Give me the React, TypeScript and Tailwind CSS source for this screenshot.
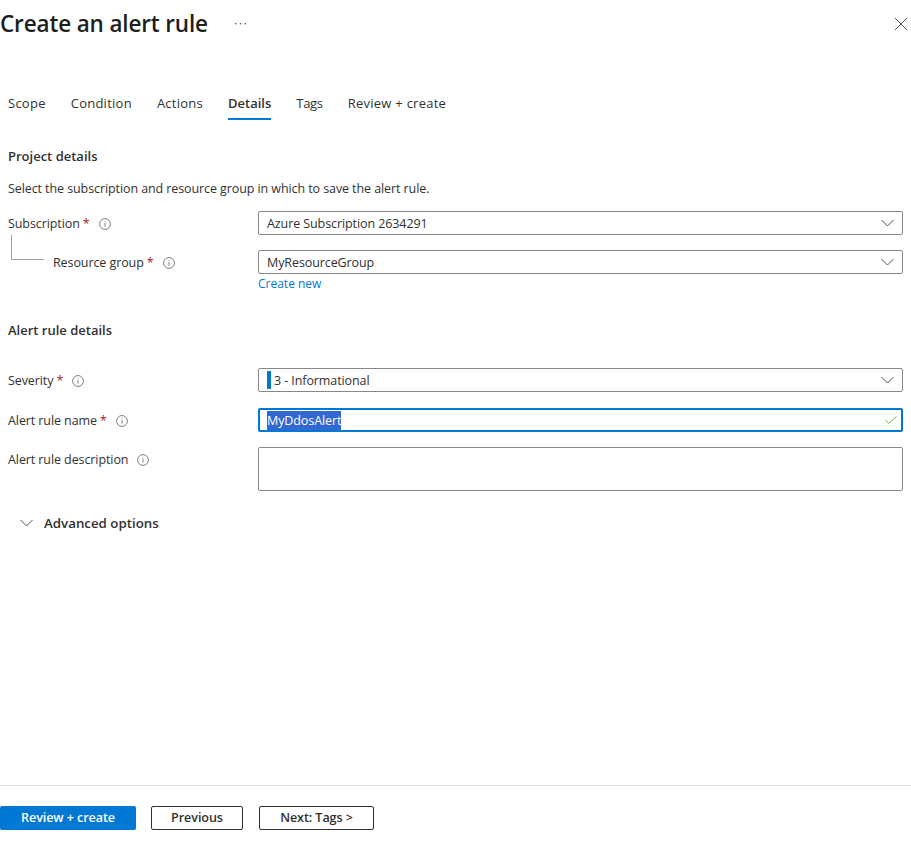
import type { ReactNode } from "react";

const tabs = ["Scope", "Condition", "Actions", "Details", "Tags", "Review + create"];

function InfoIcon() {
  return (
    <svg width="12" height="12" viewBox="0 0 12 12" fill="none" className="shrink-0">
      <circle cx="6" cy="6" r="5.4" stroke="#707070" strokeWidth="0.9" />
      <rect x="5.55" y="5" width="0.9" height="3.6" fill="#707070" />
      <rect x="5.55" y="3.2" width="0.9" height="0.9" fill="#707070" />
    </svg>
  );
}

function Chevron({ color = "#505050" }: { color?: string }) {
  return (
    <svg width="13" height="8" viewBox="0 0 13 8" fill="none">
      <path d="M0.5 1 L6.5 7 L12.5 1" stroke={color} strokeWidth="1" />
    </svg>
  );
}

function FieldLabel({ text, required }: { text: string; required?: boolean }) {
  return (
    <div className="flex h-[24px] items-center pt-[2px]">
      <span>{text}</span>
      {required && <span className="ml-[3px] text-[#a4262c]">*</span>}
      <span className="ml-[9px]">
        <InfoIcon />
      </span>
    </div>
  );
}

function Select({ children }: { children: ReactNode }) {
  return (
    <div className="flex h-[24px] items-center justify-between rounded-[2px] border border-[#8a8886] pl-[8px] pr-[8px]">
      <div className="flex items-center">{children}</div>
      <Chevron />
    </div>
  );
}

function Row({ label, children, className }: { label: ReactNode; children: ReactNode; className?: string }) {
  return (
    <div className={`grid grid-cols-[250px_645px] ${className ?? ""}`}>
      <div>{label}</div>
      <div>{children}</div>
    </div>
  );
}

function tabClass(tab: string) {
  if (tab === "Details") return "h-[29px] border-b-2 border-[#0078d4] font-semibold tracking-normal";
  if (tab === "Tags") return "h-[29px] tracking-[-0.3px]";
  return "h-[29px]";
}

export default function App() {
  return (
    <div
      className="flex h-[841px] w-[911px] flex-col overflow-hidden bg-white text-[12.5px] leading-[24px] tracking-[-0.09px] text-[#323130]"
      style={{ fontFamily: '"Open Sans", "Noto Sans", sans-serif' }}
    >
      <header className="flex h-[48px] items-center justify-between pr-[2px]">
        <div className="flex items-center">
          <h1 className="mb-[1px] text-[22.5px] leading-[47px] font-semibold tracking-[-0.15px] text-[#201f1e]">Create an alert rule</h1>
          <svg width="11" height="2" viewBox="0 0 11 2" fill="#605e5c" className="ml-[27px]">
            <rect x="0" y="0" width="1.4" height="1.4" />
            <rect x="4.8" y="0" width="1.4" height="1.4" />
            <rect x="9.6" y="0" width="1.4" height="1.4" />
          </svg>
        </div>
        <svg width="14" height="14" viewBox="0 0 14 14" fill="none" className="mr-[1px]">
          <path d="M1 1 L13 13 M13 1 L1 13" stroke="#505050" strokeWidth="1" />
        </svg>
      </header>

      <nav className="mt-[43px] flex h-[30px] gap-[25px] pl-[8px] text-[13px] tracking-[0.25px]">
        {tabs.map((tab) => (
          <div key={tab} className={tabClass(tab)}>
            {tab}
          </div>
        ))}
      </nav>

      <main className="min-h-0 flex-1 px-[8px]">
        <h2 className="mt-[23px] text-[13px] font-semibold tracking-normal">Project details</h2>
        <p className="mt-[9px]">Select the subscription and resource group in which to save the alert rule.</p>

        <Row className="mt-[10px]" label={<FieldLabel text="Subscription" required />}>
          <Select>
            <span className="pt-[2px]">Azure Subscription 2634291</span>
          </Select>
        </Row>

        <Row
          className="mt-[15px]"
          label={
            <div className="relative pl-[45px]">
              <div className="absolute top-[-15px] left-[3px] h-[25px] w-[33px] border-b border-l border-[#a19f9d]" />
              <FieldLabel text="Resource group" required />
            </div>
          }
        >
          <Select>
            <span className="pt-[2px]">MyResourceGroup</span>
          </Select>
          <div className="mt-[1px] text-[12px] leading-[18px] tracking-normal text-[#0078d4]">Create new</div>
        </Row>

        <h2 className="mt-[25px] text-[13px] font-semibold tracking-normal">Alert rule details</h2>

        <Row className="mt-[26px]" label={<FieldLabel text="Severity" required />}>
          <Select>
            <span className="mr-[3px] h-[18px] w-[4px] bg-[#0078d4]" />
            <span className="pt-[2px]">3 - Informational</span>
          </Select>
        </Row>

        <Row className="mt-[16px]" label={<FieldLabel text="Alert rule name" required />}>
          <div className="flex h-[24px] items-center justify-between rounded-[2px] border-2 border-[#0078d4] pr-[4px] pl-[7px]">
            <span className="bg-[#3367d1] pt-[1px] leading-[18px] text-white">MyDdosAlert</span>
            <svg width="12" height="8" viewBox="0 0 12 8" fill="none">
              <path d="M0.4 4 L3.8 7.4 L11.6 0.4" stroke="#7ab92d" strokeWidth="1" />
            </svg>
          </div>
        </Row>

        <Row className="mt-[15px]" label={<FieldLabel text="Alert rule description" />}>
          <div className="h-[44px] rounded-[2px] border border-[#8a8886]" />
        </Row>

        <div className="mt-[20px] flex items-center pl-[12px] text-[13.3px] font-semibold tracking-normal">
          <Chevron />
          <span className="ml-[11px]">Advanced options</span>
        </div>
      </main>

      <footer className="flex h-[56px] items-start gap-[15px] border-t border-[#e1dfdd] pt-[20px]">
        <button className="h-[24px] w-[136px] rounded-[2px] bg-[#0078d4] pb-[1px] text-[12.6px] leading-[20px] font-semibold text-white">
          Review + create
        </button>
        <button className="h-[24px] w-[92px] rounded-[2px] border border-[#323130] pb-[1px] text-[12.6px] leading-[20px] font-semibold">
          Previous
        </button>
        <button className="ml-px h-[24px] w-[115px] rounded-[2px] border border-[#323130] pb-[1px] text-[12.6px] leading-[20px] font-semibold">
          Next: Tags &gt;
        </button>
      </footer>
    </div>
  );
}
